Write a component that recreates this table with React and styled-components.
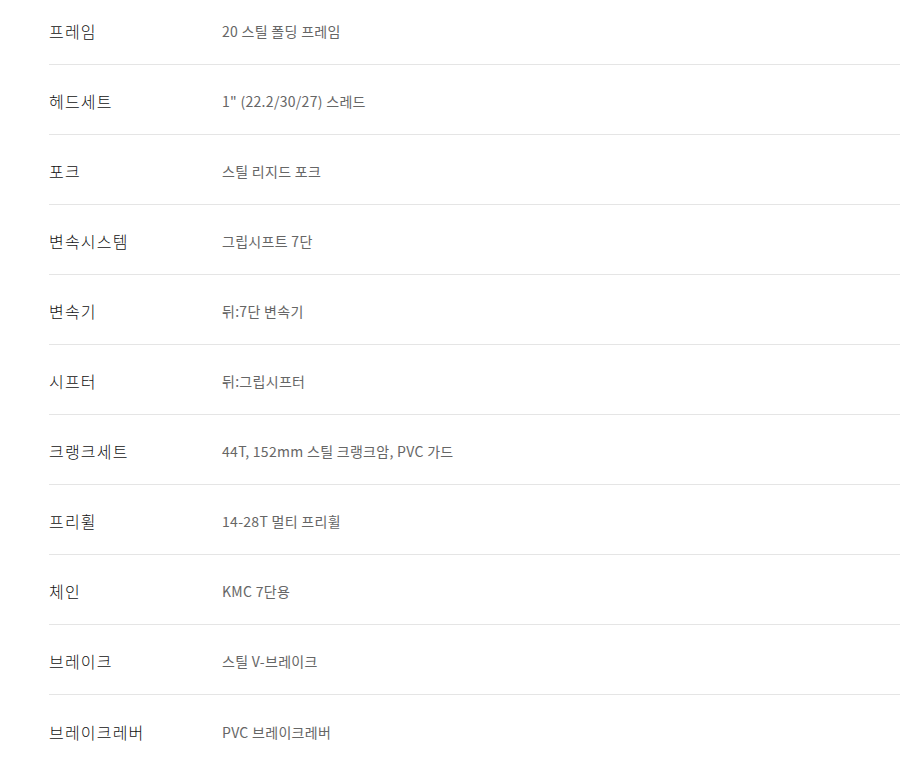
import styled, {createGlobalStyle} from "styled-components"

const GlobalStyle=createGlobalStyle`
    body{
        margin:0;
        background:#fff;
        font-family:"Noto Sans CJK KR","Noto Sans",sans-serif;
    }
`

const StyledTable=styled.dl`
    margin:-5px 0 0 49px;
    padding:0;
`
const StyledRow=styled.div`
    display:flex;
    align-items:center;
    height:70px;
    padding-top:3px;
    box-sizing:border-box;
    border-bottom:${props=>props.$last?"none":"1px solid #e5e5e5"};
`
const StyledLabel=styled.dt`
    width:173px;
    flex-shrink:0;
    font-size:16px;
    font-weight:300;
    letter-spacing:1.2px;
    color:#111;
`
const StyledValue=styled.dd`
    margin:0;
    font-size:14px;
    letter-spacing:0.3px;
    color:#666;
`

const specs=[
    ["프레임","20 스틸 폴딩 프레임"],
    ["헤드세트","1\" (22.2/30/27) 스레드"],
    ["포크","스틸 리지드 포크"],
    ["변속시스템","그립시프트 7단"],
    ["변속기","뒤:7단 변속기"],
    ["시프터","뒤:그립시프터"],
    ["크랭크세트","44T, 152mm 스틸 크랭크암, PVC 가드"],
    ["프리휠","14-28T 멀티 프리휠"],
    ["체인","KMC 7단용"],
    ["브레이크","스틸 V-브레이크"],
    ["브레이크레버","PVC 브레이크레버"],
]

function App(){
    return(
        <>
            <GlobalStyle/>
            <StyledTable>
                {specs.map(([label,value],i)=>(
                    <StyledRow key={label} $last={i===specs.length-1}>
                        <StyledLabel>{label}</StyledLabel>
                        <StyledValue>{value}</StyledValue>
                    </StyledRow>
                ))}
            </StyledTable>
        </>
    )
}

export default App;
